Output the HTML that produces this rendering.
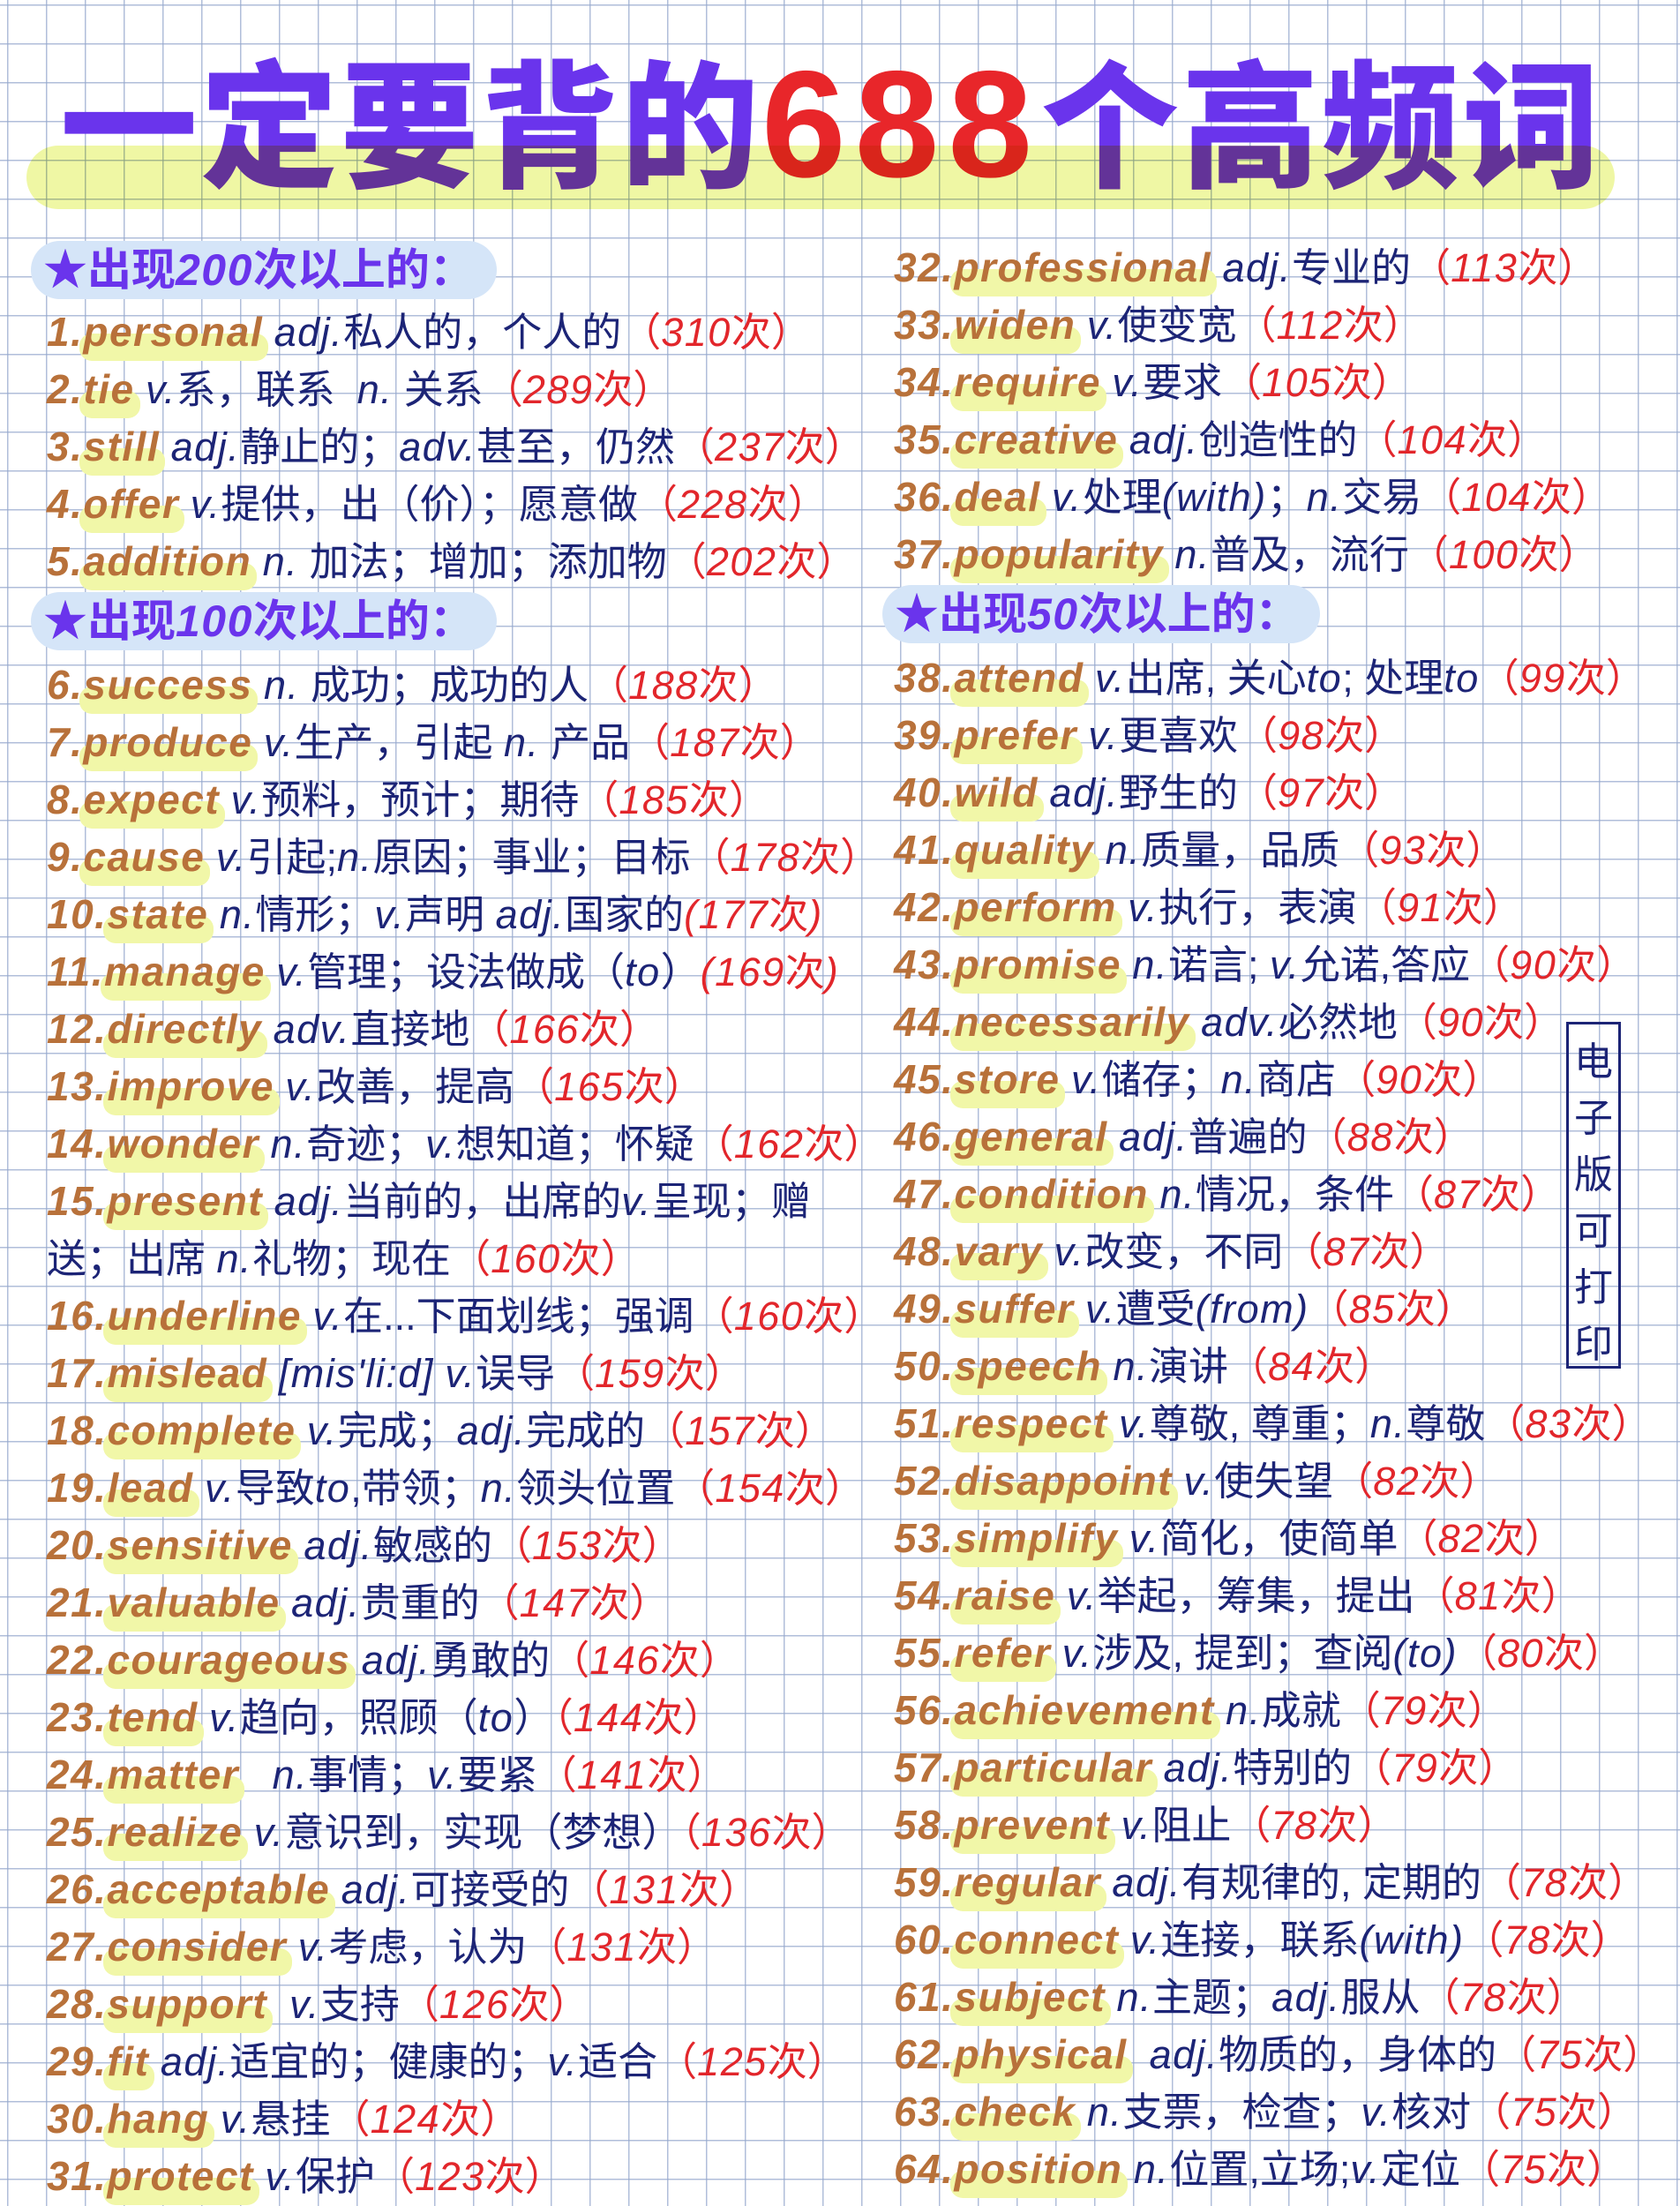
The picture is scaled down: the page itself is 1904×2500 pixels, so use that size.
<!DOCTYPE html>
<html><head><meta charset="utf-8">
<style>
html,body{margin:0;padding:0}
body{width:1904px;height:2500px;position:relative;overflow:hidden;background:#fff;
background-image:linear-gradient(to right, rgba(150,168,205,.75) 1.5px, transparent 1.5px),linear-gradient(to bottom, rgba(150,168,205,.75) 1.5px, transparent 1.5px);
background-size:44px 44px;background-position:8px 5px;
font-family:"Liberation Sans","Noto Sans CJK SC",sans-serif;}
.title{position:absolute;left:68px;top:32px;font-family:"Noto Sans CJK SC","WenQuanYi Zen Hei",sans-serif;font-weight:900;font-size:156px;line-height:200px;letter-spacing:3px;color:#6a34ec;white-space:nowrap}
.title b{color:#e8262a;font-family:"Liberation Sans",sans-serif;font-weight:bold;font-size:172px;letter-spacing:10px}
.hl{position:absolute;left:30px;top:165px;width:1800px;height:72px;border-radius:36px;background:#eef69a;mix-blend-mode:multiply;opacity:.9}
.hdr{position:absolute;height:66px;border-radius:33px;background:#d5e5f8;color:#6a34ec;font-size:50px;font-weight:bold;line-height:66px;padding-left:14px;white-space:nowrap;font-family:"Liberation Sans","Noto Sans CJK SC",sans-serif}
.hdr i{font-style:italic}
.col{position:absolute;white-space:nowrap}
.l{height:65px;line-height:65px;font-size:45px;color:#1c2476;white-space:nowrap}
.w{color:#b8713a;font-weight:bold;font-style:italic;font-size:46px;letter-spacing:1.5px}
.k{position:relative;z-index:1}
.k:before{content:"";position:absolute;left:-4px;right:-6px;top:28px;height:31px;background:#f1f7a8;border-radius:14px;z-index:-1}
i{font-style:italic;letter-spacing:1.5px}
.r{color:#e2262b}
.box{position:absolute;left:1775px;top:1158px;width:62px;height:393px;border:3px solid #1c2476;box-sizing:border-box;color:#1c2476;font-family:"Noto Sans CJK SC",sans-serif;font-size:44px;line-height:64px;text-align:center;padding-top:6px}
</style></head><body>
<div class="title">一定要背的<b>688</b>个高频词</div>
<div class="hl"></div>

<div class="hdr" style="left:35px;top:273px;width:514px">★出现<i>200</i>次以上的：</div>
<div class="col" style="left:53px;top:344px">
<div class="l"><span class="w">1.<span class="k">personal</span></span> <i>adj.</i>私人的，个人的<span class="r">（<i>310</i>次）</span></div>
<div class="l"><span class="w">2.<span class="k">tie</span></span> <i>v.</i>系，联系&nbsp; <i>n.</i> 关系<span class="r">（<i>289</i>次）</span></div>
<div class="l"><span class="w">3.<span class="k">still</span></span> <i>adj.</i>静止的；<i>adv.</i>甚至，仍然<span class="r">（<i>237</i>次）</span></div>
<div class="l"><span class="w">4.<span class="k">offer</span></span> <i>v.</i>提供，出（价）；愿意做<span class="r">（<i>228</i>次）</span></div>
<div class="l"><span class="w">5.<span class="k">addition</span></span> <i>n.</i> 加法；增加；添加物<span class="r">（<i>202</i>次）</span></div>
</div>
<div class="hdr" style="left:35px;top:671px;width:514px">★出现<i>100</i>次以上的：</div>
<div class="col" style="left:53px;top:744px">
<div class="l"><span class="w">6.<span class="k">success</span></span> <i>n.</i> 成功；成功的人<span class="r">（<i>188</i>次）</span></div>
<div class="l"><span class="w">7.<span class="k">produce</span></span> <i>v.</i>生产，引起 <i>n.</i> 产品<span class="r">（<i>187</i>次）</span></div>
<div class="l"><span class="w">8.<span class="k">expect</span></span> <i>v.</i>预料，预计；期待<span class="r">（<i>185</i>次）</span></div>
<div class="l"><span class="w">9.<span class="k">cause</span></span> <i>v.</i>引起;<i>n.</i>原因；事业；目标<span class="r">（<i>178</i>次）</span></div>
<div class="l"><span class="w">10.<span class="k">state</span></span> <i>n.</i>情形；<i>v.</i>声明 <i>adj.</i>国家的<span class="r"><i>(177</i>次<i>)</i></span></div>
<div class="l"><span class="w">11.<span class="k">manage</span></span> <i>v.</i>管理；设法做成（<i>to</i>）<span class="r"><i>(169</i>次<i>)</i></span></div>
<div class="l"><span class="w">12.<span class="k">directly</span></span> <i>adv.</i>直接地<span class="r">（<i>166</i>次）</span></div>
<div class="l"><span class="w">13.<span class="k">improve</span></span> <i>v.</i>改善，提高<span class="r">（<i>165</i>次）</span></div>
<div class="l"><span class="w">14.<span class="k">wonder</span></span> <i>n.</i>奇迹；<i>v.</i>想知道；怀疑<span class="r">（<i>162</i>次）</span></div>
<div class="l"><span class="w">15.<span class="k">present</span></span> <i>adj.</i>当前的，出席的<i>v.</i>呈现；赠</div>
<div class="l">送；出席 <i>n.</i>礼物；现在<span class="r">（<i>160</i>次）</span></div>
<div class="l"><span class="w">16.<span class="k">underline</span></span> <i>v.</i>在...下面划线；强调<span class="r">（<i>160</i>次）</span></div>
<div class="l"><span class="w">17.<span class="k">mislead</span></span> <i>[mis'li:d]</i> <i>v.</i>误导<span class="r">（<i>159</i>次）</span></div>
<div class="l"><span class="w">18.<span class="k">complete</span></span> <i>v.</i>完成；<i>adj.</i>完成的<span class="r">（<i>157</i>次）</span></div>
<div class="l"><span class="w">19.<span class="k">lead</span></span> <i>v.</i>导致<i>to</i>,带领；<i>n.</i>领头位置<span class="r">（<i>154</i>次）</span></div>
<div class="l"><span class="w">20.<span class="k">sensitive</span></span> <i>adj.</i>敏感的<span class="r">（<i>153</i>次）</span></div>
<div class="l"><span class="w">21.<span class="k">valuable</span></span> <i>adj.</i>贵重的<span class="r">（<i>147</i>次）</span></div>
<div class="l"><span class="w">22.<span class="k">courageous</span></span> <i>adj.</i>勇敢的<span class="r">（<i>146</i>次）</span></div>
<div class="l"><span class="w">23.<span class="k">tend</span></span> <i>v.</i>趋向，照顾（<i>to</i>）<span class="r">（<i>144</i>次）</span></div>
<div class="l"><span class="w">24.<span class="k">matter</span></span> &nbsp;&nbsp;<i>n.</i>事情；<i>v.</i>要紧<span class="r">（<i>141</i>次）</span></div>
<div class="l"><span class="w">25.<span class="k">realize</span></span> <i>v.</i>意识到，实现（梦想）<span class="r">（<i>136</i>次）</span></div>
<div class="l"><span class="w">26.<span class="k">acceptable</span></span> <i>adj.</i>可接受的<span class="r">（<i>131</i>次）</span></div>
<div class="l"><span class="w">27.<span class="k">consider</span></span> <i>v.</i>考虑，认为<span class="r">（<i>131</i>次）</span></div>
<div class="l"><span class="w">28.<span class="k">support</span></span> &nbsp;<i>v.</i>支持<span class="r">（<i>126</i>次）</span></div>
<div class="l"><span class="w">29.<span class="k">fit</span></span> <i>adj.</i>适宜的；健康的；<i>v.</i>适合<span class="r">（<i>125</i>次）</span></div>
<div class="l"><span class="w">30.<span class="k">hang</span></span> <i>v.</i>悬挂<span class="r">（<i>124</i>次）</span></div>
<div class="l"><span class="w">31.<span class="k">protect</span></span> <i>v.</i>保护<span class="r">（<i>123</i>次）</span></div>
</div>

<div class="col" style="left:1013px;top:271px">
<div class="l"><span class="w">32.<span class="k">professional</span></span> <i>adj.</i>专业的<span class="r">（<i>113</i>次）</span></div>
<div class="l"><span class="w">33.<span class="k">widen</span></span> <i>v.</i>使变宽<span class="r">（<i>112</i>次）</span></div>
<div class="l"><span class="w">34.<span class="k">require</span></span> <i>v.</i>要求<span class="r">（<i>105</i>次）</span></div>
<div class="l"><span class="w">35.<span class="k">creative</span></span> <i>adj.</i>创造性的<span class="r">（<i>104</i>次）</span></div>
<div class="l"><span class="w">36.<span class="k">deal</span></span> <i>v.</i>处理<i>(with)</i>；<i>n.</i>交易<span class="r">（<i>104</i>次）</span></div>
<div class="l"><span class="w">37.<span class="k">popularity</span></span> <i>n.</i>普及，流行<span class="r">（<i>100</i>次）</span></div>
</div>
<div class="hdr" style="left:1000px;top:663px;width:482px">★出现<i>50</i>次以上的：</div>
<div class="col" style="left:1013px;top:736px">
<div class="l"><span class="w">38.<span class="k">attend</span></span> <i>v.</i>出席, 关心<i>to</i>; 处理<i>to</i><span class="r">（<i>99</i>次）</span></div>
<div class="l"><span class="w">39.<span class="k">prefer</span></span> <i>v.</i>更喜欢<span class="r">（<i>98</i>次）</span></div>
<div class="l"><span class="w">40.<span class="k">wild</span></span> <i>adj.</i>野生的<span class="r">（<i>97</i>次）</span></div>
<div class="l"><span class="w">41.<span class="k">quality</span></span> <i>n.</i>质量，品质<span class="r">（<i>93</i>次）</span></div>
<div class="l"><span class="w">42.<span class="k">perform</span></span> <i>v.</i>执行，表演<span class="r">（<i>91</i>次）</span></div>
<div class="l"><span class="w">43.<span class="k">promise</span></span> <i>n.</i>诺言; <i>v.</i>允诺,答应<span class="r">（<i>90</i>次）</span></div>
<div class="l"><span class="w">44.<span class="k">necessarily</span></span> <i>adv.</i>必然地<span class="r">（<i>90</i>次）</span></div>
<div class="l"><span class="w">45.<span class="k">store</span></span> <i>v.</i>储存；<i>n.</i>商店<span class="r">（<i>90</i>次）</span></div>
<div class="l"><span class="w">46.<span class="k">general</span></span> <i>adj.</i>普遍的<span class="r">（<i>88</i>次）</span></div>
<div class="l"><span class="w">47.<span class="k">condition</span></span> <i>n.</i>情况，条件<span class="r">（<i>87</i>次）</span></div>
<div class="l"><span class="w">48.<span class="k">vary</span></span> <i>v.</i>改变，不同<span class="r">（<i>87</i>次）</span></div>
<div class="l"><span class="w">49.<span class="k">suffer</span></span> <i>v.</i>遭受<i>(from)</i><span class="r">（<i>85</i>次）</span></div>
<div class="l"><span class="w">50.<span class="k">speech</span></span> <i>n.</i>演讲<span class="r">（<i>84</i>次）</span></div>
<div class="l"><span class="w">51.<span class="k">respect</span></span> <i>v.</i>尊敬, 尊重；<i>n.</i>尊敬<span class="r">（<i>83</i>次）</span></div>
<div class="l"><span class="w">52.<span class="k">disappoint</span></span> <i>v.</i>使失望<span class="r">（<i>82</i>次）</span></div>
<div class="l"><span class="w">53.<span class="k">simplify</span></span> <i>v.</i>简化，使简单<span class="r">（<i>82</i>次）</span></div>
<div class="l"><span class="w">54.<span class="k">raise</span></span> <i>v.</i>举起，筹集，提出<span class="r">（<i>81</i>次）</span></div>
<div class="l"><span class="w">55.<span class="k">refer</span></span> <i>v.</i>涉及, 提到；查阅<i>(to)</i><span class="r">（<i>80</i>次）</span></div>
<div class="l"><span class="w">56.<span class="k">achievement</span></span> <i>n.</i>成就<span class="r">（<i>79</i>次）</span></div>
<div class="l"><span class="w">57.<span class="k">particular</span></span> <i>adj.</i>特别的<span class="r">（<i>79</i>次）</span></div>
<div class="l"><span class="w">58.<span class="k">prevent</span></span> <i>v.</i>阻止<span class="r">（<i>78</i>次）</span></div>
<div class="l"><span class="w">59.<span class="k">regular</span></span> <i>adj.</i>有规律的, 定期的<span class="r">（<i>78</i>次）</span></div>
<div class="l"><span class="w">60.<span class="k">connect</span></span> <i>v.</i>连接，联系<i>(with)</i><span class="r">（<i>78</i>次）</span></div>
<div class="l"><span class="w">61.<span class="k">subject</span></span> <i>n.</i>主题；<i>adj.</i>服从<span class="r">（<i>78</i>次）</span></div>
<div class="l"><span class="w">62.<span class="k">physical</span></span> &nbsp;<i>adj.</i>物质的，身体的<span class="r">（<i>75</i>次）</span></div>
<div class="l"><span class="w">63.<span class="k">check</span></span> <i>n.</i>支票，检查；<i>v.</i>核对<span class="r">（<i>75</i>次）</span></div>
<div class="l"><span class="w">64.<span class="k">position</span></span> <i>n.</i>位置,立场;<i>v.</i>定位<span class="r">（<i>75</i>次）</span></div>
</div>

<div class="box">电<br>子<br>版<br>可<br>打<br>印</div>
</body></html>
